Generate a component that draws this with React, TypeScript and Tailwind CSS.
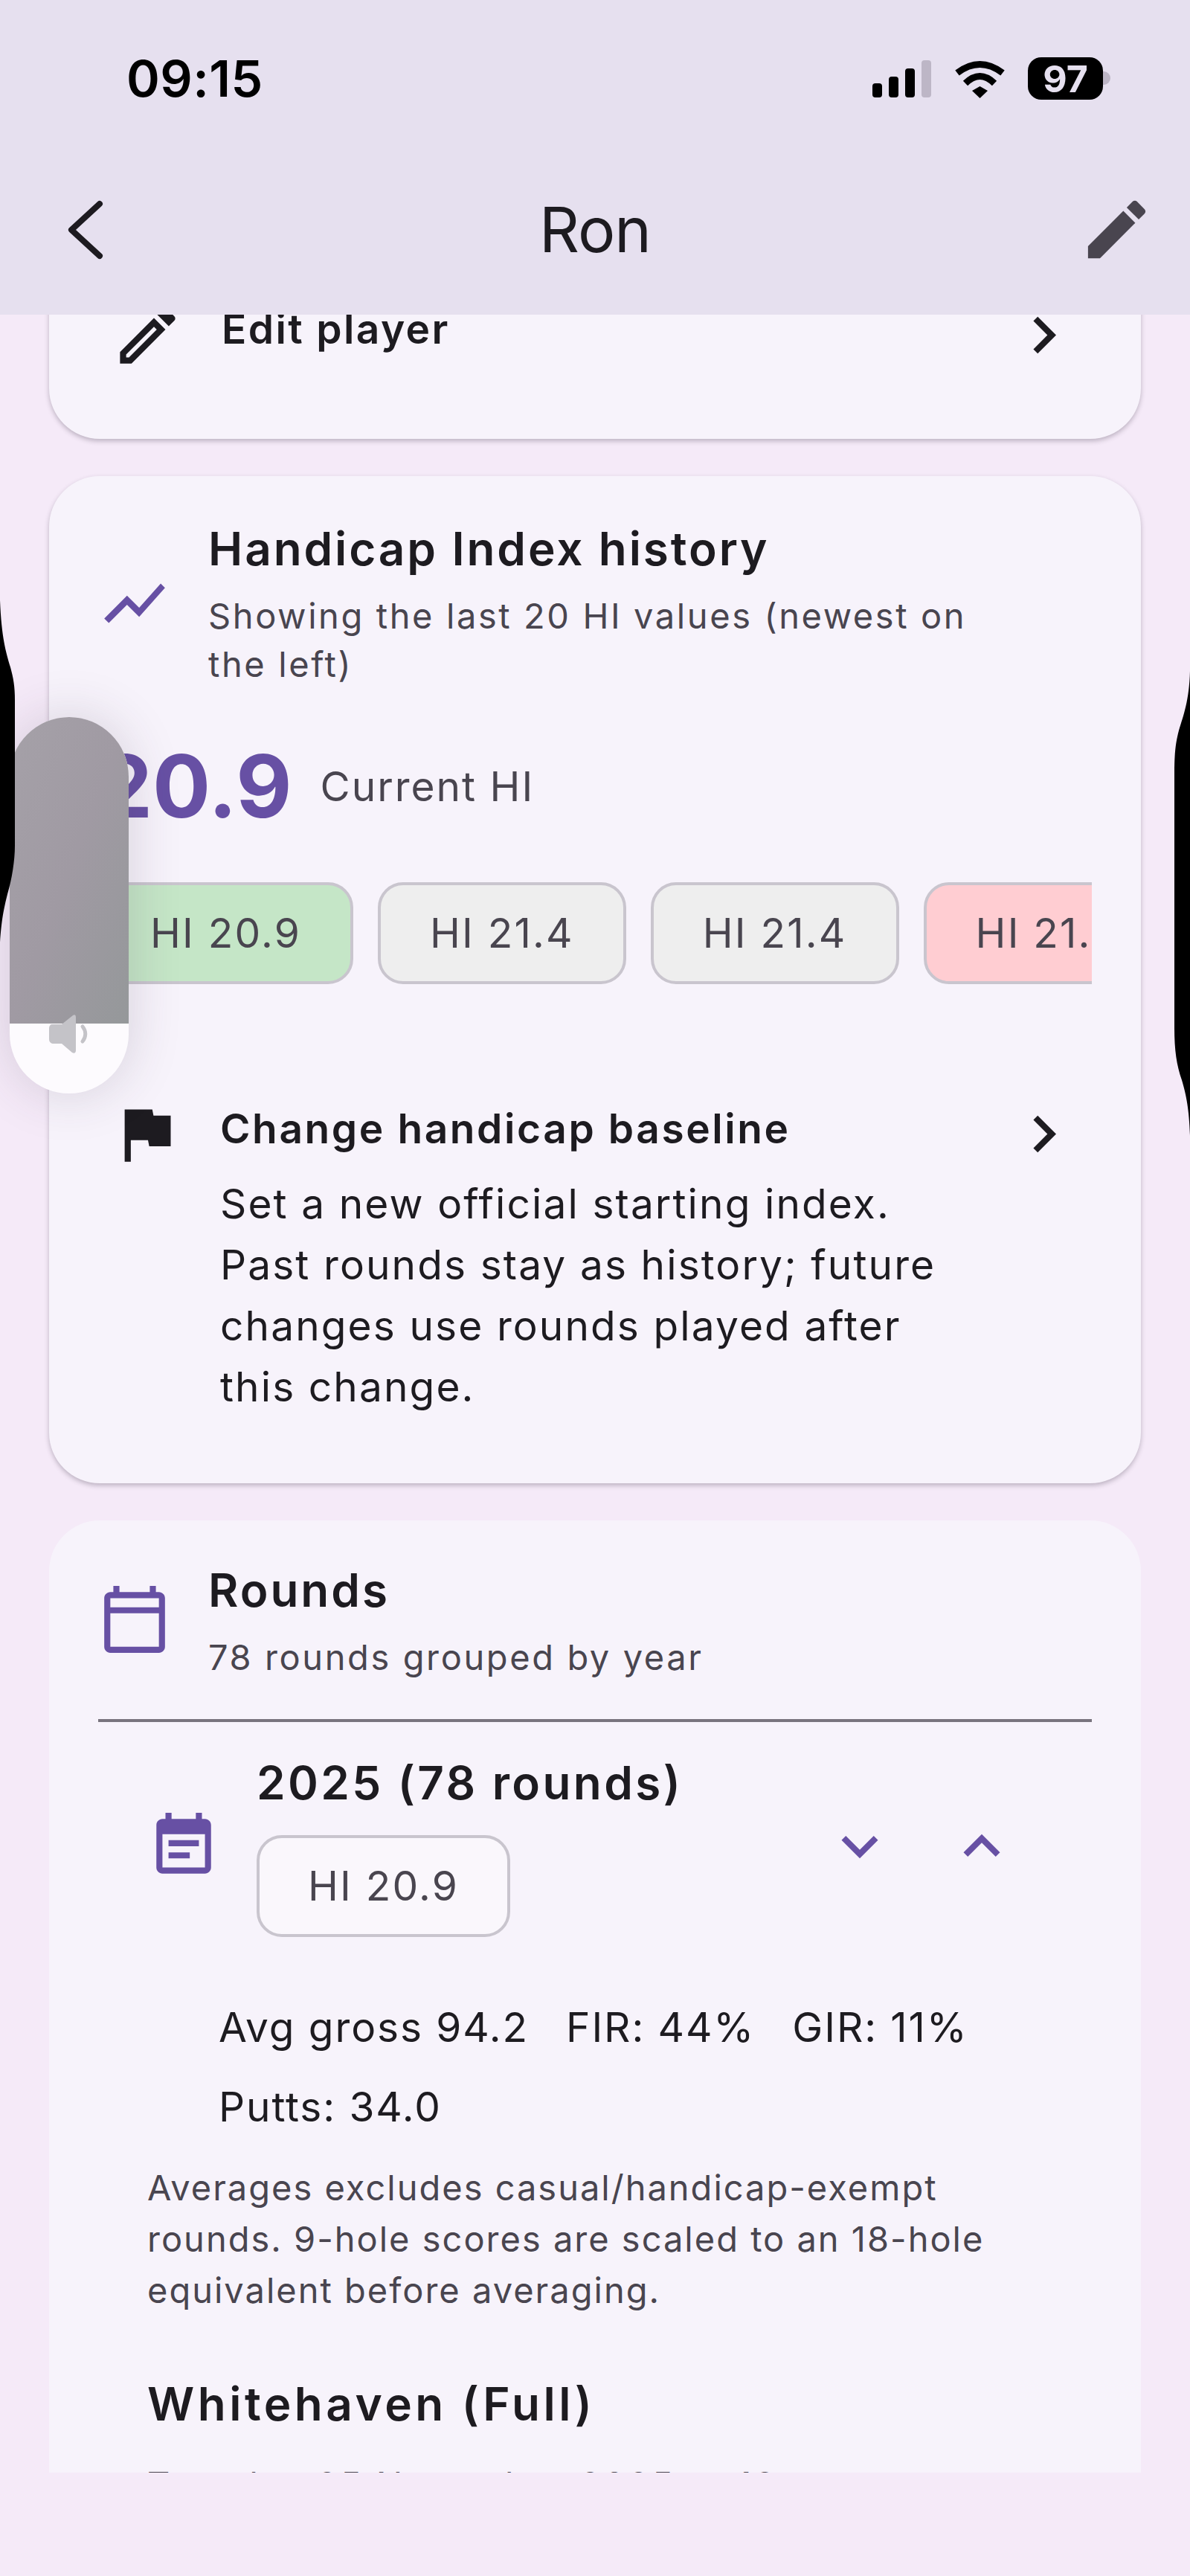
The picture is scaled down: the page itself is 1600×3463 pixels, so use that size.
import React from "react";

const PATHS = {
  edit: "M3 17.25V21h3.75L17.81 9.94l-3.75-3.75L3 17.25zM20.71 7.04c.39-.39.39-1.02 0-1.41l-2.34-2.34a.9959.9959 0 0 0-1.41 0l-1.83 1.83 3.75 3.75 1.83-1.83z",
  editOutline: "M3 17.25V21h3.75L17.81 9.94l-3.75-3.75L3 17.25zM5.92 19H5v-.92l9.06-9.06.92.92L5.92 19zM20.71 5.63l-2.34-2.34c-.2-.2-.45-.29-.71-.29s-.51.1-.7.29l-1.83 1.83 3.75 3.75 1.83-1.83c.39-.39.39-1.02 0-1.41z",
  chevronRight: "M10 6L8.59 7.41 13.17 12l-4.58 4.59L10 18l6-6z",
  showChart: "M3.5 18.49l6-6.01 4 4L22 6.92l-1.41-1.41-7.09 7.97-4-4L2 16.99z",
  flag: "M14.4 6L14 4H5v17h2v-7h5.6l.4 2h7V6z",
  calendar: "M20 3h-1V1h-2v2H7V1H5v2H4c-1.1 0-2 .9-2 2v16c0 1.1.9 2 2 2h16c1.1 0 2-.9 2-2V5c0-1.1-.9-2-2-2zm0 2v3H4V5h16zm0 16H4V10h16v11z",
  eventNote: "M17 10H7v2h10v-2zm2-7h-1V1h-2v2H8V1H6v2H5c-1.11 0-1.99.9-1.99 2L3 19c0 1.1.89 2 2 2h14c1.1 0 2-.9 2-2V5c0-1.1-.9-2-2-2zm0 16H5V8h14v11zm-5-5H7v2h7v-2z",
  expandMore: "M16.59 8.59L12 13.17 7.41 8.59 6 10l6 6 6-6z",
  expandLess: "M12 8l-6 6 1.41 1.41L12 10.83l4.59 4.58L18 14z",
};

const Icon = ({ d, className }: { d: string; className: string }) => (
  <svg viewBox="0 0 24 24" fill="currentColor" className={"shrink-0 " + className}>
    <path d={d} />
  </svg>
);

const Chip = ({ label, color }: { label: string; color: string }) => (
  <div className={"shrink-0 h-[137px] px-[66px] flex items-center rounded-[34px] border-[4px] border-[#c9c5ce] text-[55px] tracking-[2.2px] text-[#49454f] " + color}>
    {label}
  </div>
);

const StatusBar = () => (
  <div className="flex items-center justify-between pt-[77px] pl-[170px] pr-[107px] h-[134px]">
    <span className="font-semibold text-[68px] leading-[57px] tracking-[0.4px] text-black">09:15</span>
    <div className="flex items-end">
      <svg viewBox="0 0 79 50" className="w-[79px] h-[50px] mb-[3px]">
        <rect x="0" y="31" width="13" height="19" rx="4" fill="#000" />
        <rect x="22" y="22" width="13" height="28" rx="4" fill="#000" />
        <rect x="44" y="11" width="13" height="39" rx="4" fill="#000" />
        <rect x="66" y="0" width="13" height="50" rx="4" fill="#bdb6c6" />
      </svg>
      <svg viewBox="0 0 69 51" className="w-[69px] h-[51px] ml-[31px] mb-[2px]">
        <path d="M4 17Q34.500 -6 65 17" fill="none" stroke="#000" strokeWidth="9" />
        <path d="M15 31Q34.500 12 54 31" fill="none" stroke="#000" strokeWidth="9" />
        <path d="M24 41L34.500 35 45 41 34.500 51z" fill="#000" />
      </svg>
      <div className="ml-[30px] w-[101px] h-[57px] rounded-[18px] bg-black flex items-center justify-center font-bold text-[50px] leading-none text-[#e6e0ef]">
        97
      </div>
      <div className="w-[10px] h-[18px] mb-[20px] rounded-r-[9px] bg-[#bdb6c6]" />
    </div>
  </div>
);

const App = () => {
  return (
    <div className="relative w-[1600px] h-[3463px] overflow-hidden bg-[#f5eaf8] font-[Inter,sans-serif] text-[#1d1b20]">
      <header className="relative z-10 h-[423px] bg-[#e6e0ef]">
        <StatusBar />
        <div className="flex items-center justify-between mt-[123px] h-[103px] pl-[88px] pr-[47px]">
          <svg viewBox="0 0 56 86" className="w-[56px] h-[86px] text-[#1d1b20]">
            <path d="M46 8L8 43 46 78" fill="none" stroke="currentColor" strokeWidth="8" strokeLinecap="round" strokeLinejoin="round" />
          </svg>
          <h1 className="ml-[6px] text-[84px] leading-[103px] tracking-[-1px]">Ron</h1>
          <Icon d={PATHS.edit} className="w-[103px] h-[103px] text-[#49454f]" />
        </div>
      </header>

      <main className="flex flex-col gap-[50px] h-[2901px] overflow-hidden px-[66px]">
        {/* first card is scrolled under the app bar */}
        <section className="shrink-0 -mt-[233px] h-[400px] rounded-[68px] bg-[#f7f3fb] shadow-[0_3px_6px_rgba(60,50,70,0.3)]">
          <div className="flex items-start pt-[234px] pl-[83px] pr-[81px]">
            <Icon d={PATHS.editOutline} className="w-[99px] h-[99px] -mt-[22px]" />
            <div className="flex-1 ml-[50px] -mt-[12px] text-[55px] leading-[60px] font-semibold tracking-[2.4px]">Edit player</div>
            <Icon d={PATHS.chevronRight} className="w-[99px] h-[99px] -mt-[23px]" />
          </div>
        </section>

        <section className="shrink-0 h-[1354px] rounded-[68px] bg-[#f7f3fb] shadow-[0_3px_6px_rgba(60,50,70,0.3)] px-[66px] pt-[54px]">
          <div className="flex items-center gap-[50px]">
            <Icon d={PATHS.showChart} className="w-[98px] h-[98px] text-[#6750a4]" />
            <div>
              <h2 className="text-[62px] leading-[88px] font-semibold tracking-[2.9px]">Handicap Index history</h2>
              <p className="mt-[13px] mb-[2px] text-[47px] leading-[65px] tracking-[2.6px] text-[#49454f]">
                Showing the last 20 HI values (newest on
                <br />
                the left)
              </p>
            </div>
          </div>

          <div className="flex items-center gap-[38px] mt-[65px] h-[130px]">
            <span className="text-[116px] leading-[130px] font-bold text-[#6750a4]">20.9</span>
            <span className="text-[55px] tracking-[2px] text-[#49454f]">Current HI</span>
          </div>

          <div className="flex gap-[33px] mt-[64px] overflow-hidden">
            <Chip label="HI 20.9" color="bg-[#c5e6c7]" />
            <Chip label="HI 21.4" color="bg-[#eeeeee]" />
            <Chip label="HI 21.4" color="bg-[#eeeeee]" />
            <Chip label="HI 21.6" color="bg-[#ffcdd2]" />
          </div>

          <div className="flex items-start mt-[150px] pl-[15px]">
            <Icon d={PATHS.flag} className="w-[99px] h-[99px] mt-[2px]" />
            <div className="w-[1000px] ml-[50px]">
              <h3 className="text-[55px] leading-[88px] font-semibold tracking-[2.6px]">Change handicap baseline</h3>
              <p className="mt-[16px] text-[55px] leading-[82px] tracking-[2.1px]">
                Set a new official starting index.
                <br />
                Past rounds stay as history; future
                <br />
                changes use rounds played after
                <br />
                this change.
              </p>
            </div>
            <Icon d={PATHS.chevronRight} className="w-[99px] h-[99px] ml-[58px] mt-[2px]" />
          </div>
        </section>

        <section className="shrink-0 h-[1400px] rounded-[68px] bg-[#f7f3fb] px-[66px] pt-[50px]">
          <div className="flex items-center gap-[50px]">
            <Icon d={PATHS.calendar} className="w-[98px] h-[98px] text-[#6750a4]" />
            <div>
              <h2 className="text-[62px] leading-[88px] font-semibold tracking-[3px]">Rounds</h2>
              <p className="mt-[13px] text-[47px] leading-[65px] tracking-[2.6px] text-[#49454f]">78 rounds grouped by year</p>
            </div>
          </div>
          <div className="h-[4px] mt-[51px] bg-[#79747e]" />

          <div className="flex items-center mt-[45px] pl-[66px] pr-[99px]">
            <Icon d={PATHS.eventNote} className="w-[98px] h-[98px] text-[#6750a4]" />
            <div className="flex-1 ml-[49px]">
              <h3 className="text-[62px] leading-[74px] font-semibold tracking-[3.4px]">2025 (78 rounds)</h3>
              <div className="inline-flex items-center h-[137px] mt-[33px] px-[65px] rounded-[34px] border-[4px] border-[#c9c5ce] bg-[#faf7fc] text-[55px] tracking-[2.2px] text-[#49454f]">
                HI 20.9
              </div>
            </div>
            <div className="flex gap-[66px] text-[#6750a4]">
              <Icon d={PATHS.expandMore} className="w-[98px] h-[98px]" />
              <Icon d={PATHS.expandLess} className="w-[98px] h-[98px]" />
            </div>
          </div>

          <div className="flex flex-wrap gap-x-[50px] mt-[68px] pl-[162px] text-[55px] leading-[107px] tracking-[1.9px]">
            <span>Avg gross 94.2</span>
            <span>FIR: 44%</span>
            <span>GIR: 11%</span>
            <span>Putts: 34.0</span>
          </div>

          <p className="w-[1230px] mt-[20px] pl-[66px] text-[47px] leading-[69px] tracking-[2px] text-[#49454f]">
            Averages excludes casual/handicap-exempt rounds. 9-hole scores are scaled to an 18-hole equivalent before averaging.
          </p>

          <h3 className="mt-[75px] pl-[66px] text-[62px] leading-[88px] font-semibold tracking-[4.5px]">Whitehaven (Full)</h3>
          <p className="mt-[31px] pl-[66px] text-[47px] leading-[65px] tracking-[3.3px] text-[#49454f]">Tuesday 25 November 2025 — 18</p>
        </section>
      </main>

      {/* volume overlay + phone frame edges lying over the recording */}
      <div className="absolute left-[13px] top-[964px] w-[160px] h-[506px] rounded-[80px] overflow-hidden bg-[#fdfbfe] shadow-[0_0_70px_rgba(60,50,70,0.18)]">
        <div className="h-[412px] bg-gradient-to-br from-[#a5a1a8] via-[#a09aa3] to-[#95989a]" />
        <svg viewBox="0 0 54 54" className="absolute left-[53px] top-[399px] w-[54px] h-[54px]">
          <path d="M4 14h13L32 2c3-2 4 0 4 3v44c0 3-2 5-5 3L17 40H6c-3 0-6-2-6-6V19c0-3 2-5 4-5z" fill="#c4c3c8" />
          <path d="M45 17c5 6 5 14 0 20" fill="none" stroke="#c4c3c8" strokeWidth="5" strokeLinecap="round" />
        </svg>
      </div>
      <svg viewBox="0 0 21 460" preserveAspectRatio="none" className="absolute left-0 top-[807px] w-[21px] h-[460px]">
        <path d="M0 0C2 50 8 70 14 90C18 105 20 115 20 135L20 330C20 350 16 375 10 395C5 415 2 430 0 460z" fill="#000" />
      </svg>
      <svg viewBox="0 0 21 625" preserveAspectRatio="none" className="absolute right-0 top-[902px] w-[21px] h-[625px]">
        <path d="M21 0C20 40 12 60 6 80C2 95 0 110 0 135L0 480C0 510 3 530 10 550C16 570 20 590 21 625z" fill="#000" />
      </svg>
    </div>
  );
};

export default App;
